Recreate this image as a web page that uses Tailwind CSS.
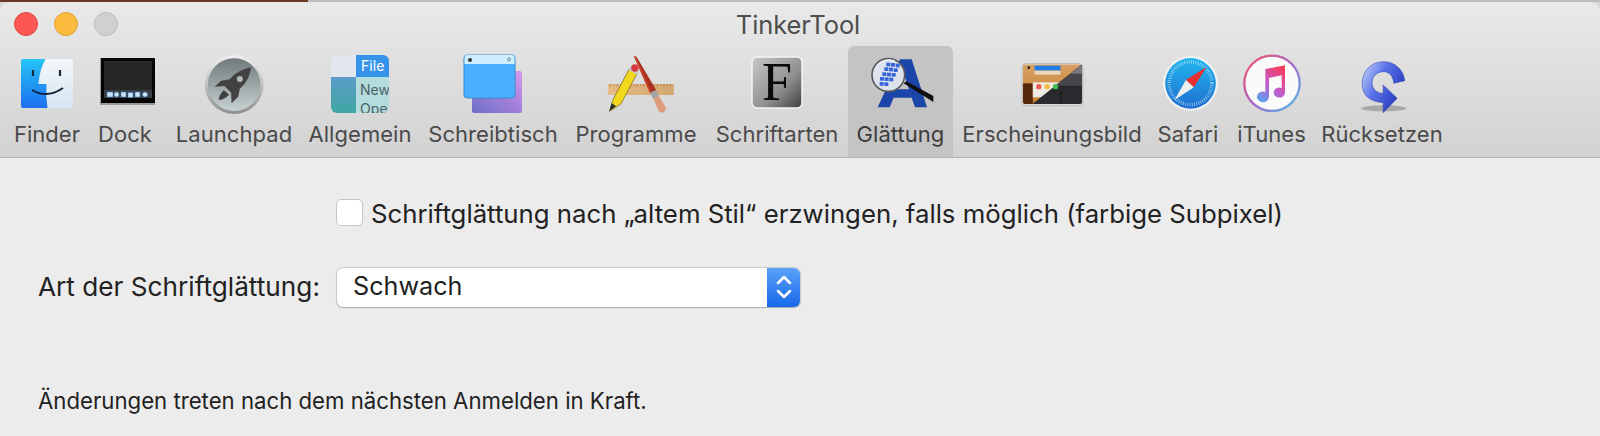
<!DOCTYPE html>
<html lang="de">
<head>
<meta charset="utf-8">
<title>TinkerTool</title>
<script src="https://cdn.jsdelivr.net/npm/@tailwindcss/browser@4"></script>
</head>
<body class="m-0 h-[436px] w-[1600px] overflow-hidden bg-[#d9d9d9] font-['Inter','Liberation_Sans',sans-serif]">
<div class="flex h-[2px] w-full"><div class="w-[308px] bg-[#6b3a22]"></div><div class="flex-1 bg-[#bdbdbd]"></div></div>
<div class="flex h-[434px] flex-col overflow-hidden rounded-t-[10px] bg-[#ececec]">
  <header class="flex h-[156px] flex-col border-b border-[#b4b4b4] bg-gradient-to-b from-[#e9e9e9] to-[#d2d2d2]">
    <div class="relative flex h-[44px] items-center justify-center">
      <div class="absolute left-[14px] top-[10px] flex gap-[16px]">
        <span class="h-[24px] w-[24px] rounded-full border border-[#e0443e] bg-[#fc5753]"></span>
        <span class="h-[24px] w-[24px] rounded-full border border-[#dea034] bg-[#fdbc40]"></span>
        <span class="h-[24px] w-[24px] rounded-full border border-[#b9b9b9] bg-[#d0d0d0]"></span>
      </div>
      <h1 class="relative -left-[2px] top-[1px] text-[25.5px] font-normal leading-none tracking-[-0.1px] text-[#4d4d4d]">TinkerTool</h1>
    </div>
    <nav class="flex h-[111px] pl-[7px] text-[22px] leading-none tracking-[0.05px] text-[#4a4a4a]">
      <div class="flex w-[80px] flex-col items-center">
        <div class="h-[77px]"><svg class="mt-[9px] block h-[60px] w-[60px]" viewBox="0 0 60 60">
          <defs>
            <linearGradient id="f1" x1="0" y1="0" x2="0" y2="1"><stop offset="0" stop-color="#25c4f6"/><stop offset="1" stop-color="#1e6ff0"/></linearGradient>
            <linearGradient id="f2" x1="0" y1="0" x2="0" y2="1"><stop offset="0" stop-color="#f4f7fa"/><stop offset="1" stop-color="#d5e5f2"/></linearGradient>
          </defs>
          <rect x="4" y="4" width="52" height="49" rx="2" fill="url(#f2)"/>
          <path d="M6 4h22.500q-6 11-7 25h8q-1 12 1 24H6a2 2 0 0 1-2-2V6a2 2 0 0 1 2-2z" fill="url(#f1)"/>
          <path d="M16 15v6M43 15v6" stroke="#1b2a3a" stroke-width="2.200"/>
          <path d="M15 35q15 9 31-2" fill="none" stroke="#12233a" stroke-width="2"/>
        </svg></div>
        <span>Finder</span>
      </div>
      <div class="flex w-[76px] flex-col items-center">
        <div class="h-[77px]"><svg class="mt-[9px] block h-[60px] w-[60px]" viewBox="-3 0 60 60">
          <rect x="2" y="3" width="56" height="47" fill="#9a9a9a"/>
          <rect x="3" y="3" width="54" height="45" fill="#050505"/>
          <rect x="6" y="6" width="48" height="37" fill="#262626"/>
          <rect x="6" y="35" width="48" height="8" fill="#3a3e45"/>
          <g fill="#c9e3fa" stroke="#2c6fb5" stroke-width="0.500">
            <rect x="9" y="37" width="6" height="5"/><circle cx="18.500" cy="39.500" r="2.500"/><rect x="23" y="37" width="5" height="5"/><rect x="30" y="37.500" width="5" height="5"/><rect x="37" y="37" width="5" height="5"/><circle cx="47" cy="39.500" r="2.500"/>
          </g>
        </svg></div>
        <span>Dock</span>
      </div>
      <div class="ml-[5px] flex w-[132px] flex-col items-center">
        <div class="h-[77px]"><svg class="mt-[4px] block h-[68px] w-[75px]" viewBox="-10.500 0 225 204">
          <defs>
            <linearGradient id="l1" x1="0" y1="0" x2="0" y2="1"><stop offset="0" stop-color="#efefef"/><stop offset="1" stop-color="#8f8f8f"/></linearGradient>
            <linearGradient id="l2" x1="0" y1="0" x2="0" y2="1"><stop offset="0" stop-color="#6f787a"/><stop offset="1" stop-color="#c9d2d2"/></linearGradient>
          </defs>
          <circle cx="101" cy="104" r="88" fill="url(#l1)"/>
          <circle cx="101" cy="104" r="79" fill="url(#l2)"/>
          <path d="M152 52C125 58 105 68 88 88L62 92 42 110 72 108 92 128 93 160 113 140 118 116C138 100 148 78 152 52Z" fill="#424242"/>
          <path d="M70 120Q55 135 55 150 72 148 86 134Z" fill="#424242"/>
          <circle cx="118" cy="87" r="9" fill="#b3bbbb"/>
        </svg></div>
        <span>Launchpad</span>
      </div>
      <div class="flex w-[120px] flex-col items-center">
        <div class="h-[77px]"><svg class="mt-[8px] block h-[60px] w-[60px]" viewBox="0 0 60 60">
          <defs>
            <linearGradient id="a1" x1="0" y1="0" x2="0" y2="1"><stop offset="0" stop-color="#5c9ccb"/><stop offset="1" stop-color="#3fa7a0"/></linearGradient>
            <clipPath id="a2"><rect x="1" y="1" width="58" height="58" rx="6"/></clipPath>
          </defs>
          <g clip-path="url(#a2)">
            <rect x="1" y="1" width="26" height="22" fill="#e3e7ee"/>
            <rect x="26" y="1" width="33" height="22" fill="#3593ea"/>
            <rect x="1" y="23" width="25" height="36" fill="url(#a1)"/>
            <rect x="26" y="23" width="33" height="36" fill="#b4dcdc"/>
            <text x="31" y="17" font-size="14" fill="#ffffff" font-family="Inter">File</text>
            <text x="30" y="41" font-size="14" fill="#4d6268" font-family="Inter">New</text>
            <text x="30" y="60" font-size="14" fill="#4d6268" font-family="Inter">Ope</text>
          </g>
        </svg></div>
        <span>Allgemein</span>
      </div>
      <div class="flex w-[146px] flex-col items-center">
        <div class="h-[77px]"><svg class="mt-[8px] block h-[60px] w-[60px]" viewBox="0 0 60 60">
          <defs><linearGradient id="s1" x1="0" y1="1" x2="1" y2="0"><stop offset="0" stop-color="#6d70c9"/><stop offset="0.500" stop-color="#a07fd8"/><stop offset="1" stop-color="#d89af0"/></linearGradient></defs>
          <rect x="9" y="17" width="50" height="42" rx="2" fill="url(#s1)"/>
          <rect x="1" y="1" width="51" height="43" rx="3" fill="#4bafff" stroke="#3a8ccc"/>
          <path d="M1.500 10V4a3 3 0 0 1 3-3h44a3 3 0 0 1 3 3v6z" fill="#cdeeff"/>
          <circle cx="7" cy="6" r="2" fill="#333333"/>
          <circle cx="46" cy="5.500" r="1.500" fill="none" stroke="#555555" stroke-width="0.700"/>
        </svg></div>
        <span>Schreibtisch</span>
      </div>
      <div class="flex w-[140px] flex-col items-center">
        <div class="h-[77px]"><svg class="mt-[4px] block h-[68px] w-[75px]" viewBox="-4.500 0 225 204">
          <defs><linearGradient id="p1" x1="0" y1="0" x2="1" y2="0"><stop offset="0" stop-color="#e6bb85"/><stop offset="1" stop-color="#d3a672"/></linearGradient></defs>
          <rect x="22" y="102" width="198" height="33" fill="url(#p1)"/>
          <path d="M30 102v9M40 102v6M50 102v9M60 102v6M70 102v9M80 102v6M90 102v9M100 102v6M110 102v9M120 102v6M130 102v9M140 102v6M150 102v9M160 102v6M170 102v9M180 102v6M190 102v9M200 102v6M210 102v9" stroke="#9e7a4c" stroke-width="2"/>
          <path d="M27 184L38 148 86 57 110 70 61 162Z" fill="#f2d81e" stroke="#6a5c12" stroke-width="2"/>
          <path d="M27 184L33 160 47 168Z" fill="#2c2c2c"/>
          <path d="M84 60L110 74 116 62 92 48Z" fill="#c8c8c8"/>
          <circle cx="103" cy="54" r="11" fill="#d63c3e"/>
          <path d="M100 18L108 20 167 120 148 129Z" fill="#a8321f"/>
          <path d="M100 18L104 19 152 126 148 129Z" fill="#d24a34"/>
          <path d="M148 129L167 120 175 138 159 147Z" fill="#a3a3a3"/>
          <path d="M159 147L175 138 197 174 190 188 175 185Z" fill="#dd9d7c"/>
        </svg></div>
        <span>Programme</span>
      </div>
      <div class="flex w-[142px] flex-col items-center">
        <div class="h-[77px]"><svg class="mt-[9px] block h-[60px] w-[60px] overflow-visible" viewBox="0 0 60 60">
          <defs><linearGradient id="t1" x1="0" y1="0" x2="1" y2="1"><stop offset="0" stop-color="#c9c9c9"/><stop offset="0.600" stop-color="#8f8f8f"/><stop offset="1" stop-color="#3f3f3f"/></linearGradient></defs>
          <rect x="5" y="2" width="50" height="51" rx="5" fill="url(#t1)" stroke="#f4f4f4" stroke-width="1.500"/>
          <text x="30" y="45" text-anchor="middle" font-size="54" fill="#0a0a0a" font-family="Liberation Serif">F</text>
        </svg></div>
        <span>Schriftarten</span>
      </div>
      <div class="flex h-[111px] w-[105px] flex-col items-center rounded-t-[6px] bg-[#c4c4c4] text-[#3c3c3c]">
        <div class="h-[77px]"><svg class="mt-[4px] block h-[68px] w-[75px]" viewBox="-6 0 225 204">
          <path fill-rule="evenodd" d="M105 28H140L186 172H150L140 143H86L74 172H38ZM113 60L95 118H132Z" fill="#1b45a8"/>
          <path d="M116 100L124 94 205 138 205 156Z" fill="#101010"/>
          <circle cx="70" cy="75" r="49" fill="#dde2ec" stroke="#5c5c5c" stroke-width="5"/>
          <path d="M34 48A47 47 0 0 1 90 33" fill="none" stroke="#ffffff" stroke-width="3"/>
          <g fill="#3565d8">
            <rect x="64" y="38" width="12" height="11"/><rect x="78" y="39" width="12" height="11"/><rect x="92" y="41" width="12" height="11"/>
            <rect x="58" y="52" width="12" height="11"/><rect x="72" y="53" width="12" height="11"/><rect x="86" y="55" width="12" height="11"/>
            <rect x="52" y="67" width="12" height="11"/><rect x="66" y="68" width="12" height="11"/><rect x="80" y="69" width="12" height="11"/>
            <rect x="45" y="81" width="12" height="11"/><rect x="59" y="82" width="12" height="11"/><rect x="73" y="83" width="12" height="11"/>
            <rect x="44" y="96" width="12" height="11"/><rect x="58" y="97" width="12" height="11"/>
          </g>
        </svg></div>
        <span>Glättung</span>
      </div>
      <div class="flex w-[198px] flex-col items-center">
        <div class="h-[77px]"><svg class="mt-[4px] block h-[68px] w-[75px]" viewBox="-1.500 -15 225 204">
          <defs>
            <clipPath id="e1"><rect x="22" y="28" width="178" height="120" rx="10"/></clipPath>
            <linearGradient id="e2" x1="0" y1="0" x2="0" y2="1"><stop offset="0" stop-color="#d7a063"/><stop offset="1" stop-color="#c9812f"/></linearGradient>
          </defs>
          <rect x="20" y="26" width="182" height="126" rx="11" fill="#f0f0f0" stroke="#9f9f9f" stroke-width="2"/>
          <g clip-path="url(#e1)">
            <rect x="22" y="28" width="178" height="120" fill="url(#e2)"/>
            <rect x="22" y="85" width="30" height="63" fill="#55280c"/>
            <rect x="57" y="32" width="78" height="15" fill="#1f7fe6"/>
            <rect x="57" y="47" width="78" height="12" fill="#ecd7ba"/>
            <rect x="52" y="82" width="84" height="45" fill="#efe9e2"/>
            <path d="M200 28L50 148H200Z" fill="#29292e"/>
            <path d="M200 28L118 92H200Z" fill="#47474b"/>
            <path d="M200 28L165 56H200Z" fill="#7b7580"/>
            <path d="M136 110V148" stroke="#111111" stroke-width="2"/>
            <circle cx="70" cy="95" r="8" fill="#ee5a52"/><circle cx="95" cy="95" r="8" fill="#f1bd3c"/><circle cx="120" cy="95" r="8" fill="#3dbd54"/>
            <circle cx="40" cy="38" r="4" fill="#222222"/>
          </g>
        </svg></div>
        <span>Erscheinungsbild</span>
      </div>
      <div class="flex w-[74px] flex-col items-center">
        <div class="h-[77px]"><svg class="mt-[4px] block h-[68px] w-[75px]" viewBox="1.500 0 225 204">
          <defs><linearGradient id="sf" x1="0" y1="0" x2="0" y2="1"><stop offset="0" stop-color="#22b6ee"/><stop offset="1" stop-color="#1e6fd0"/></linearGradient></defs>
          <circle cx="120" cy="100" r="82" fill="#f3f3f3"/>
          <circle cx="120" cy="100" r="76" fill="url(#sf)"/>
          <circle cx="120" cy="100" r="64" fill="none" stroke="#d5ecfb" stroke-width="10" stroke-dasharray="1.600 5.100"/>
          <path d="M168 51L106 90 130 112Z" fill="#ea2f2f"/>
          <path d="M72 150L106 90 130 112Z" fill="#eeeeee"/>
        </svg></div>
        <span>Safari</span>
      </div>
      <div class="flex w-[93px] flex-col items-center">
        <div class="h-[77px]"><svg class="mt-[4px] block h-[68px] w-[75px]" viewBox="252 0 225 204">
          <defs>
            <linearGradient id="i1" x1="0" y1="0" x2="1" y2="1"><stop offset="0" stop-color="#f5555f"/><stop offset="0.500" stop-color="#a964c8"/><stop offset="1" stop-color="#4cc0e8"/></linearGradient>
            <linearGradient id="i2" x1="0.800" y1="0" x2="0.200" y2="1"><stop offset="0" stop-color="#f83c5c"/><stop offset="0.550" stop-color="#c25ccc"/><stop offset="1" stop-color="#5aa0f0"/></linearGradient>
          </defs>
          <circle cx="366" cy="100" r="83" fill="#fafafa" stroke="url(#i1)" stroke-width="7"/>
          <path d="M346 57L405 46V128A17 15 0 1 1 395 114V76L357 84V141A18 16 0 1 1 346 126Z" fill="url(#i2)"/>
        </svg></div>
        <span>iTunes</span>
      </div>
      <div class="flex w-[128px] flex-col items-center">
        <div class="h-[77px]"><svg class="mt-[4px] block h-[68px] w-[75px]" viewBox="-16.500 0 225 204">
          <defs><linearGradient id="r1" x1="0" y1="0.200" x2="1" y2="0.800"><stop offset="0" stop-color="#b9c8f6"/><stop offset="0.350" stop-color="#5c75ea"/><stop offset="1" stop-color="#1c2eb5"/></linearGradient></defs>
          <ellipse cx="100" cy="175" rx="68" ry="9" fill="#a8a8a8"/>
          <path d="M163 92C158 55 130 35 100 35 60 35 35 65 35 100 35 135 55 155 98 158L98 188 140 145 98 105 98 130C80 130 65 118 65 98 65 78 80 65 100 65 118 65 128 80 130 100Z" fill="url(#r1)" stroke="#2a3ca8" stroke-width="1.500"/>
        </svg></div>
        <span>Rücksetzen</span>
      </div>
    </nav>
  </header>
  <main class="flex flex-1 flex-col text-[#222222]">
    <div class="mt-[39px] flex h-[30px] items-center pl-[336px]">
      <span class="h-[27px] w-[27px] rounded-[5px] border border-[#c5c5c5] bg-white"></span>
      <span class="ml-[8px] pt-[3px] text-[25.75px] leading-none">Schriftglättung nach „altem Stil“ erzwingen, falls möglich (farbige Subpixel)</span>
    </div>
    <div class="mt-[40px] flex h-[40px] items-center pl-[38px]">
      <span class="w-[299px] text-[26.2px] leading-none">Art der Schriftglättung:</span>
      <div class="flex h-[39px] w-[463px] overflow-hidden rounded-[6px] bg-white shadow-[0_0_1px_1px_rgba(0,0,0,0.15),0_1px_1px_rgba(0,0,0,0.15)]">
        <span class="flex flex-1 items-center pl-[16px] text-[25.2px] leading-none">Schwach</span>
        <span class="flex w-[33px] items-center justify-center bg-gradient-to-b from-[#5aa1f8] to-[#1667ea]">
          <svg class="h-[28px] w-[18px]" viewBox="0 0 18 28" fill="none" stroke="#ffffff" stroke-width="2.500" stroke-linecap="round" stroke-linejoin="round"><path d="M3 10l6-6 6 6M3 18l6 6 6-6"/></svg>
        </span>
      </div>
    </div>
    <p class="mt-[83px] pl-[38px] text-[22.2px] leading-none">Änderungen treten nach dem nächsten Anmelden in Kraft.</p>
  </main>
</div>
</body>
</html>
